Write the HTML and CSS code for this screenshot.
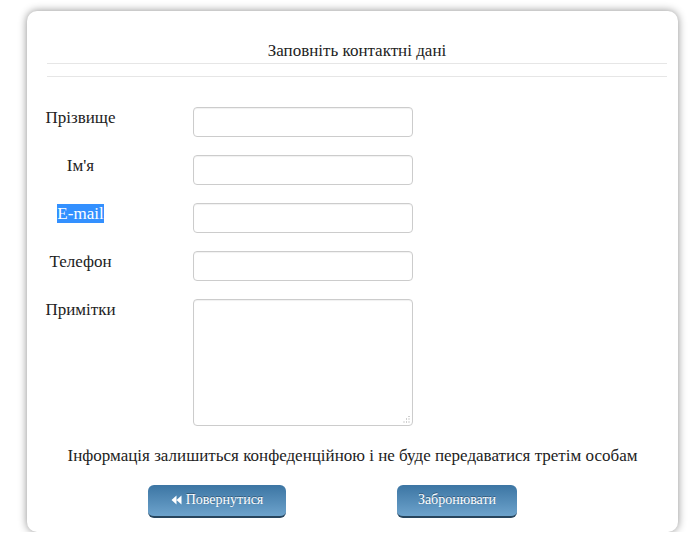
FILE: index.html
```html
<!DOCTYPE html>
<html lang="uk">
<head>
<meta charset="utf-8">
<title>Заповніть контактні дані</title>
<link rel="stylesheet" href="styles.css">
</head>
<body>
<div class="card">
  <div class="header">
    <h2 class="title">Заповніть контактні дані</h2>
  </div>
  <div class="divider"></div>
  <form class="form">
    <label class="label">Прізвище</label>
    <input class="field" type="text">
    <label class="label">Ім'я</label>
    <input class="field" type="text">
    <label class="label"><span class="selected">E-mail</span></label>
    <input class="field" type="text">
    <label class="label">Телефон</label>
    <input class="field" type="text">
    <label class="label">Примітки</label>
    <div class="area-wrap">
      <textarea class="field area"></textarea>
      <svg class="grip" width="7" height="7" viewBox="0 0 7 7">
        <g fill="#a0a0a0">
          <rect x="5.5" y="0" width="1" height="1"/>
          <rect x="3" y="2.5" width="1" height="1"/>
          <rect x="5.5" y="2.5" width="1" height="1"/>
          <rect x="0.5" y="5.5" width="1" height="1"/>
          <rect x="3" y="5.5" width="1" height="1"/>
          <rect x="5.5" y="5.5" width="1" height="1"/>
        </g>
      </svg>
    </div>
  </form>
  <p class="note">Інформація залишиться конфеденційною і не буде передаватися третім особам</p>
  <div class="actions">
    <button class="btn btn-back" type="button"><svg class="icon" width="11" height="10" viewBox="0 0 11 10"><path d="M5.5 0.5V9.5L0.5 5Z M10.5 0.5V9.5L5.5 5Z" fill="#fff"/></svg>Повернутися</button>
    <button class="btn btn-book" type="button">Забронювати</button>
  </div>
</div>
</body>
</html>
```
FILE: styles.css
```css
html, body {
  margin: 0;
  padding: 0;
  background: #fff;
}
body {
  font-family: "Liberation Serif", "Times New Roman", serif;
  color: #222;
  overflow: hidden;
}
.card {
  margin: 11px 17px 0 27px;
  width: 651px;
  height: 521px;
  box-sizing: border-box;
  background: #fff;
  border-radius: 10px;
  box-shadow: 0 0 9px rgba(0, 0, 0, 0.45);
  overflow: hidden;
}
.header {
  margin: 0 11px 0 20px;
  padding: 30px 0 2px;
  border-bottom: 1px solid #e6e6e6;
}
.title {
  margin: 0;
  font-size: 17px;
  line-height: 20px;
  font-weight: normal;
  text-align: center;
  color: #222;
}
.divider {
  margin: 0 11px 0 20px;
  height: 12px;
  border-bottom: 1px solid #e6e6e6;
}
.form {
  margin: 30px 0 0;
  padding-left: 18px;
  display: grid;
  grid-template-columns: 71px 220px;
  column-gap: 77px;
  row-gap: 18px;
}
.label {
  font-size: 17px;
  line-height: 20px;
  padding-top: 1px;
  text-align: center;
  white-space: nowrap;
  color: #222;
}
.selected {
  background: #3390ff;
  color: #fff;
}
.field {
  display: block;
  box-sizing: border-box;
  width: 220px;
  height: 30px;
  margin: 0;
  border: 1px solid #ccc;
  border-radius: 4px;
  background: #fff;
  box-shadow: inset 0 1px 1px rgba(0, 0, 0, 0.06);
  font-family: "Liberation Serif", serif;
  font-size: 14px;
}
.area-wrap {
  position: relative;
  width: 220px;
  height: 127px;
}
.area {
  height: 127px;
  resize: none;
}
.grip {
  position: absolute;
  right: 3px;
  bottom: 3px;
  display: block;
}
.note {
  margin: 20px 0 0;
  font-size: 17px;
  line-height: 20px;
  text-align: center;
  color: #222;
}
.actions {
  display: flex;
  align-items: flex-start;
  gap: 111px;
  margin-top: 19px;
  padding-left: 121px;
}
.btn {
  display: flex;
  align-items: center;
  justify-content: center;
  gap: 4px;
  height: 33px;
  box-sizing: border-box;
  padding: 0 0 1px;
  border: none;
  border-bottom: 2px solid #27455d;
  border-radius: 6px;
  background: linear-gradient(#3c75a3, #6da3cc);
  color: #fff;
  font-family: "Liberation Serif", "Times New Roman", serif;
  font-size: 14px;
  text-shadow: 0 -1px 0 rgba(0, 0, 0, 0.35);
  cursor: pointer;
}
.btn-back {
  width: 138px;
}
.btn-book {
  width: 120px;
}
.icon {
  display: block;
}
```
